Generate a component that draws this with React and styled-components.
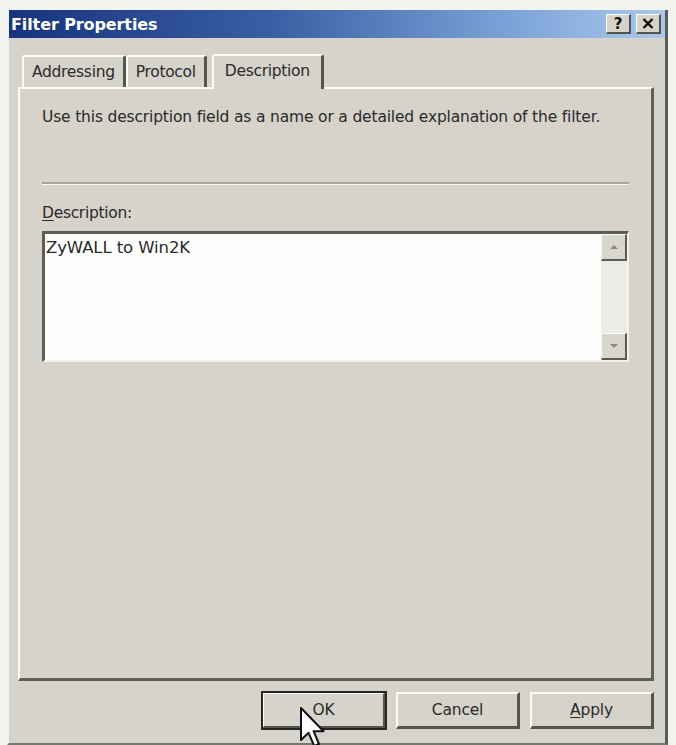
import React from 'react'
import styled, { createGlobalStyle } from 'styled-components'

const GlobalStyle = createGlobalStyle`
  html, body {
    margin: 0;
    padding: 0;
    background: #f3f3ef;
  }
  body {
    font-family: "DejaVu Sans", Verdana, sans-serif;
    color: #262626;
  }
`

const Window = styled.div`
  position: relative;
  margin: 10px 0 0 7px;
  width: 661px;
  height: 735px;
  box-sizing: border-box;
  background: #d6d3ca;
  border-left: 2px solid #f2f1ec;
  border-right: 3px solid #5c5c58;
  border-bottom: 2px solid #77776f;
  display: flex;
  flex-direction: column;
`

const TitleBar = styled.div`
  height: 28px;
  display: flex;
  align-items: center;
  padding: 0 4px 0 2px;
  background: linear-gradient(90deg, #17347f 0%, #3a5ea4 40%, #7aa0d6 75%, #a9c8ec 100%);
`

const Title = styled.div`
  flex: 1;
  color: #fff;
  font-weight: bold;
  font-size: 16px;
  letter-spacing: -0.1px;
`

const CaptionButton = styled.div`
  width: 25px;
  height: 20px;
  margin-left: ${(p) => (p.gap ? '5px' : '0')};
  box-sizing: border-box;
  background: #d6d3ca;
  border-top: 1px solid #ffffff;
  border-left: 1px solid #ffffff;
  border-right: 2px solid #55554f;
  border-bottom: 2px solid #55554f;
  display: flex;
  align-items: center;
  justify-content: center;
  font-weight: bold;
  font-size: 15px;
  color: #111;
`

const Body = styled.div`
  flex: 1;
  display: flex;
  flex-direction: column;
  padding: 14px 11px 0 9px;
`

const TabRow = styled.div`
  display: flex;
  align-items: flex-end;
  height: 35px;
  padding-left: 4px;
  position: relative;
  z-index: 1;
`

const Tab = styled.div`
  height: ${(p) => (p.active ? '35px' : '32px')};
  box-sizing: border-box;
  padding: 0 ${(p) => (p.active ? '11px' : '8px')};
  margin-left: ${(p) => (p.active ? '5px' : '0')};
  margin-bottom: ${(p) => (p.active ? '-2px' : '0')};
  background: #d6d3ca;
  border-top: 2px solid #fbfbf7;
  border-left: 2px solid #fbfbf7;
  border-right: 3px solid #55554f;
  border-radius: 3px 3px 0 0;
  display: flex;
  align-items: center;
  font-size: 15.5px;
  letter-spacing: -0.3px;
  color: #2a2a2a;
  padding-bottom: ${(p) => (p.active ? '4px' : '0')};
`

const Panel = styled.div`
  height: 594px;
  box-sizing: border-box;
  border-top: 2px solid #fbfbf7;
  border-left: 2px solid #fbfbf7;
  border-right: 3px solid #5f5f59;
  border-bottom: 3px solid #5f5f59;
  padding: 19px 22px 0 22px;
  display: flex;
  flex-direction: column;
`

const Intro = styled.div`
  font-size: 15.5px;
  letter-spacing: -0.17px;
  color: #2a2a2a;
`

const Separator = styled.div`
  margin: 56px 0 0 0;
  height: 0;
  border-top: 2px solid #a6a49c;
  border-bottom: 1px solid #f8f7f2;
`

const Label = styled.div`
  margin-top: 19px;
  font-size: 15.5px;
  letter-spacing: -0.3px;
  color: #2a2a2a;

  u {
    text-decoration: underline;
    text-underline-offset: 2px;
  }
`

const TextArea = styled.div`
  margin-top: 9px;
  height: 131px;
  box-sizing: border-box;
  background: #fdfdfb;
  border-top: 3px solid #5e5e58;
  border-left: 3px solid #5e5e58;
  border-right: 2px solid #f2f1ec;
  border-bottom: 2px solid #f2f1ec;
  display: flex;
`

const FieldText = styled.div`
  flex: 1;
  padding: 4px 1px;
  font-size: 16.5px;
  letter-spacing: -0.1px;
  color: #2a2a2a;
`

const ScrollBar = styled.div`
  width: 26px;
  display: flex;
  flex-direction: column;
  background: #ecebe6;
`

const ScrollButton = styled.div`
  height: 27px;
  box-sizing: border-box;
  background: #d9d6ce;
  border-top: 1px solid #fbfbf7;
  border-left: 1px solid #fbfbf7;
  border-right: 2px solid #5c5c56;
  border-bottom: 2px solid #5c5c56;
  display: flex;
  align-items: center;
  justify-content: center;
`

const Track = styled.div`
  flex: 1;
`

const Footer = styled.div`
  display: flex;
  justify-content: flex-end;
  gap: 10px;
  padding-top: 11px;
`

const Button = styled.div`
  width: 124px;
  height: 37px;
  box-sizing: border-box;
  background: #d6d3ca;
  border-top: 2px solid #fbfbf7;
  border-left: 2px solid #fbfbf7;
  border-right: 3px solid #55554f;
  border-bottom: 3px solid #55554f;
  outline: ${(p) => (p.primary ? '2px solid #262622' : 'none')};
  outline-offset: -1px;
  display: flex;
  align-items: center;
  justify-content: center;
  font-size: 15.5px;
  letter-spacing: -0.2px;
  color: #2a2a2a;

  u {
    text-decoration: underline;
    text-underline-offset: 2px;
  }
`

const Pointer = styled.svg`
  position: absolute;
  left: 290px;
  top: 696px;
`

function Arrow({ up }) {
  return (
    <svg width="10" height="6" viewBox="0 0 10 6">
      <path d={up ? 'M1 5 L5 1 L9 5 Z' : 'M1 1 L5 5 L9 1 Z'} fill="#8a8a84" />
    </svg>
  )
}

export default function App() {
  return (
    <>
      <GlobalStyle />
      <Window>
        <TitleBar>
          <Title>Filter Properties</Title>
          <CaptionButton>?</CaptionButton>
          <CaptionButton gap>
            <svg width="12" height="11" viewBox="0 0 12 11">
              <path d="M1.5 1 L10.5 10 M10.5 1 L1.5 10" stroke="#111" strokeWidth="2.4" />
            </svg>
          </CaptionButton>
        </TitleBar>
        <Body>
          <TabRow>
            <Tab>Addressing</Tab>
            <Tab>Protocol</Tab>
            <Tab active>Description</Tab>
          </TabRow>
          <Panel>
            <Intro>Use this description field as a name or a detailed explanation of the filter.</Intro>
            <Separator />
            <Label><u>D</u>escription:</Label>
            <TextArea>
              <FieldText>ZyWALL to Win2K</FieldText>
              <ScrollBar>
                <ScrollButton><Arrow up /></ScrollButton>
                <Track />
                <ScrollButton><Arrow /></ScrollButton>
              </ScrollBar>
            </TextArea>
          </Panel>
          <Footer>
            <Button primary>OK</Button>
            <Button>Cancel</Button>
            <Button><u>A</u>pply</Button>
          </Footer>
        </Body>
        <Pointer width="26" height="44" viewBox="0 0 13 22">
          <path d="M1 1 L1 17 L4.8 13.4 L7.6 20 L10 19 L7.3 12.6 L12.3 12.6 Z" fill="#fff" stroke="#111" strokeWidth="1" strokeLinejoin="round" />
        </Pointer>
      </Window>
    </>
  )
}
